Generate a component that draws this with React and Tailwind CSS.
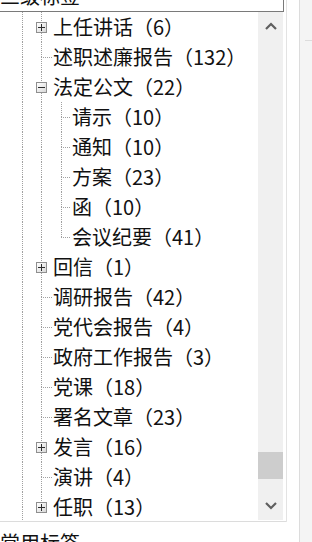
import React from "react";

const FONT = { fontFamily: '"Noto Sans CJK SC", "Noto Sans", sans-serif' };

const items = [
  { label: "上任讲话（6）", level: 2, box: "plus" },
  { label: "述职述廉报告（132）", level: 2 },
  { label: "法定公文（22）", level: 2, box: "minus" },
  { label: "请示（10）", level: 3 },
  { label: "通知（10）", level: 3 },
  { label: "方案（23）", level: 3 },
  { label: "函（10）", level: 3 },
  { label: "会议纪要（41）", level: 3, last: true },
  { label: "回信（1）", level: 2, box: "plus" },
  { label: "调研报告（42）", level: 2 },
  { label: "党代会报告（4）", level: 2 },
  { label: "政府工作报告（3）", level: 2 },
  { label: "党课（18）", level: 2 },
  { label: "署名文章（23）", level: 2 },
  { label: "发言（16）", level: 2, box: "plus" },
  { label: "演讲（4）", level: 2 },
  { label: "任职（13）", level: 2, box: "plus", last: true },
];

// one cell of tree lines: vertical at x=offset, optional horizontal branch
const Lines = ({ width, offset, top = true, bottom = true, branch = 0, box }) => (
  <div className="relative h-full shrink-0 flex flex-col" style={{ width }}>
    <div className="h-[15px] flex">
      <div className="shrink-0" style={{ width: offset }} />
      {top && <div className="border-l border-dotted border-[#a0a0a0]" />}
    </div>
    <div className="h-[15px] flex">
      <div className="shrink-0" style={{ width: offset }} />
      <div
        className={
          (bottom ? "border-l " : "") +
          (branch ? "border-t " : "") +
          "border-dotted border-[#a0a0a0] h-full"
        }
        style={{ width: branch || undefined }}
      />
    </div>
    {box && (
      <div
        className="absolute top-[10px] w-[11px] h-[11px] border border-[#8f8f8f] bg-gradient-to-br from-white to-[#d8d8d8] flex items-center justify-center"
        style={{ left: offset - 5 }}
      >
        <div className="relative w-[7px] h-[7px] flex items-center justify-center">
          <div className="w-[7px] h-[1px] bg-[#2b2b2b]" />
          {box === "plus" && (
            <div className="absolute w-[1px] h-[7px] bg-[#2b2b2b]" />
          )}
        </div>
      </div>
    )}
  </div>
);

const Row = ({ item }) => (
  <div className="h-[30px] flex items-center shrink-0">
    <Lines width={32} offset={22} />
    {item.level === 2 ? (
      <Lines
        width={21}
        offset={9}
        bottom={!item.last}
        branch={item.box ? 0 : 11}
        box={item.box}
      />
    ) : (
      <>
        <Lines width={21} offset={9} />
        <Lines width={19} offset={8} bottom={!item.last} branch={9} />
      </>
    )}
    <span className="text-[20px] leading-[30px] text-[#111] whitespace-nowrap">
      {item.label}
    </span>
  </div>
);

const Chevron = ({ up }) => (
  <svg width="12" height="8" viewBox="0 0 12 8">
    <polyline
      points={up ? "1,7 6,2 11,7" : "1,1 6,6 11,1"}
      fill="none"
      stroke="#5f5f5f"
      strokeWidth="2.2"
    />
  </svg>
);

export default function App() {
  return (
    <div className="w-[312px] h-[542px] bg-white overflow-hidden flex" style={FONT}>
      <div className="w-[287px] shrink-0 flex flex-col">
        <div className="border-r border-[#e3e3e3] flex flex-col">
          {/* search box, scrolled mostly out of view */}
          <div className="h-[12px] w-[284px] border-r border-b border-[#7a7a7a] overflow-hidden">
            <div className="-mt-[19px] text-[20px] leading-[30px] text-[#111] whitespace-nowrap">
              三级标签
            </div>
          </div>
          {/* tree */}
          <div className="h-[510px] border-b border-[#dcdcdc] flex overflow-hidden">
            <div className="w-[258px] shrink-0 flex flex-col overflow-hidden">
              {items.map((it) => (
                <Row key={it.label} item={it} />
              ))}
            </div>
            <div className="w-[25px] h-[508px] shrink-0 bg-[#f0f0f0] flex flex-col">
              <div className="h-[28px] flex items-center justify-center">
                <Chevron up />
              </div>
              <div className="flex-1" />
              <div className="h-[27px] bg-[#cdcdcd]" />
              <div className="h-[13px]" />
              <div className="h-[28px] flex items-center justify-center">
                <Chevron />
              </div>
            </div>
          </div>
        </div>
        <div className="pt-[6px] text-[20px] leading-[30px] text-[#111] whitespace-nowrap">
          常用标签
        </div>
      </div>
      <div className="w-[12px] shrink-0" />
      <div className="flex-1 border-l border-[#dcdcdc] bg-[#f4f4f4]">
        <div className="mt-[40px] ml-[5px] border-t border-[#dcdcdc]" />
      </div>
    </div>
  );
}
